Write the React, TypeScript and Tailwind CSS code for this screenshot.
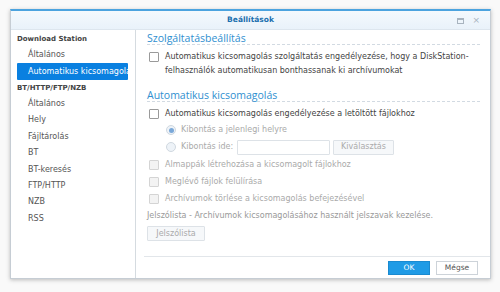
import React from 'react'

const font = { fontFamily: '"DejaVu Sans", Verdana, sans-serif' }
const headFont = { fontFamily: '"Open Sans", sans-serif' }

const Check = ({ disabled }: { disabled?: boolean }) => (
    <span
        className={`inline-block w-[10px] h-[10px] shrink-0 border rounded-[1px] ${
            disabled ? 'border-[#d4d4d4] bg-[#f3f3f3]' : 'border-[#9a9a9a] bg-white'
        }`}
    />
)

const Radio = ({ checked }: { checked?: boolean }) => (
    <span className="inline-flex items-center justify-center w-[10px] h-[10px] shrink-0 rounded-full border border-[#d0d8e0] bg-[#eef3f8]">
        {checked && <span className="w-[5px] h-[5px] rounded-full bg-[#7aa8d8]" />}
    </span>
)

const SideItem = ({ label, active }: { label: string; active?: boolean }) => (
    <div
        className={`h-[16.4px] flex items-center pl-[11px] text-[8px] whitespace-nowrap overflow-hidden ${
            active ? 'bg-[#0a80e0] text-white rounded-[1px]' : 'text-[#555]'
        }`}
    >
        {label}
    </div>
)

export default function App() {
    return (
        <div className="w-[500px] h-[292px] bg-[#f9f9f9] relative" style={font}>
            <div className="absolute left-[10px] top-[9px] w-[481px] h-[270px] bg-white border border-[#c6cdd4] border-t-2 border-t-[#4ba3df] shadow-[0_1px_4px_rgba(0,0,0,0.25)] flex flex-col">
                {/* title bar */}
                <div className="h-[19px] shrink-0 flex items-center justify-center relative bg-gradient-to-b from-[#f4f9fd] to-[#e9f2fa] border-b border-[#dde6ee]">
                    <span className="text-[7.5px] font-bold text-[#1a6fae]">Beállítások</span>
                    <div className="absolute right-[10px] top-[5px] flex items-center gap-[8px] text-[#a8b4bf]">
                        <span className="w-[7px] h-[6px] border border-[#a8b4bf] border-t-2" />
                        <span className="text-[9px] leading-none">×</span>
                    </div>
                </div>

                <div className="flex flex-1 min-h-0">
                    {/* sidebar */}
                    <div className="w-[125px] shrink-0 border-r border-[#d5dbe0] pl-[6px] pr-[7px] pt-[1px]">
                        <div className="h-[16px] flex items-center text-[7px] font-bold text-[#444]">Download Station</div>
                        <SideItem label="Általános" />
                        <SideItem label="Automatikus kicsomagolás" active />
                        <div className="h-[16px] flex items-center text-[7px] font-bold text-[#444]">BT/HTTP/FTP/NZB</div>
                        <SideItem label="Általános" />
                        <SideItem label="Hely" />
                        <SideItem label="Fájltárolás" />
                        <SideItem label="BT" />
                        <SideItem label="BT-keresés" />
                        <SideItem label="FTP/HTTP" />
                        <SideItem label="NZB" />
                        <SideItem label="RSS" />
                    </div>

                    {/* content */}
                    <div className="flex-1 flex flex-col min-w-0">
                        <div className="flex-1 pl-[11px] pr-[10px] pt-[2px] text-[8px] text-[#444]">
                            <div className="text-[10.5px] leading-[12px] text-[#2f8fd0] border-b border-dashed border-[#d2dae2]" style={headFont}>
                                Szolgáltatásbeállítás
                            </div>
                            <div className="flex gap-[6px] mt-[5px] leading-[14px]">
                                <span className="mt-[2px] ml-[2px]">
                                    <Check />
                                </span>
                                <span className="whitespace-nowrap">
                                    Automatikus kicsomagolás szolgáltatás engedélyezése, hogy a DiskStation-
                                    <br />
                                    felhasználók automatikusan bonthassanak ki archívumokat
                                </span>
                            </div>

                            <div className="text-[10.5px] leading-[12px] text-[#2f8fd0] mt-[11px] border-b border-dashed border-[#d2dae2]" style={headFont}>
                                Automatikus kicsomagolás
                            </div>
                            <div className="flex items-center gap-[6px] h-[16px] mt-[4px] pl-[2px]">
                                <Check />
                                <span>Automatikus kicsomagolás engedélyezése a letöltött fájlokhoz</span>
                            </div>
                            <div className="flex items-center gap-[5px] h-[16px] pl-[19px] text-[#aaa]">
                                <Radio checked />
                                <span>Kibontás a jelenlegi helyre</span>
                            </div>
                            <div className="flex items-center gap-[5px] h-[18px] pl-[19px] text-[#aaa]">
                                <Radio />
                                <span className="w-[51px] shrink-0 whitespace-nowrap">Kibontás ide:</span>
                                <span className="w-[93px] h-[15px] shrink-0 border border-[#dde2e7] rounded-[1px] bg-white" />
                                <span className="h-[15px] w-[61px] shrink-0 ml-[-2px] border border-[#dde2e7] rounded-[1px] bg-[#f6f8fa] flex items-center justify-center">
                                    Kiválasztás
                                </span>
                            </div>
                            {[
                                'Almappák létrehozása a kicsomagolt fájlokhoz',
                                'Meglévő fájlok felülírása',
                                'Archívumok törlése a kicsomagolás befejezésével',
                            ].map((t) => (
                                <div key={t} className="flex items-center gap-[6px] h-[17px] pl-[2px] text-[#aaa]">
                                    <Check disabled />
                                    <span>{t}</span>
                                </div>
                            ))}
                            <div className="h-[17px] flex items-center text-[#999]">
                                Jelszólista - Archívumok kicsomagolásához használt jelszavak kezelése.
                            </div>
                            <div className="mt-[2px] h-[15px] w-[58px] border border-[#dde2e7] rounded-[1px] bg-[#f6f8fa] text-[#aaa] flex items-center justify-center">
                                Jelszólista
                            </div>
                        </div>

                        {/* footer */}
                        <div className="h-[22px] shrink-0 ml-[8px] border-t border-[#e2e6ea] flex items-center justify-end gap-[6px] pr-[12px]">
                            <span className="w-[42px] h-[14px] bg-[#1f9be6] border border-[#1a8ad0] text-white text-[7.5px] flex items-center justify-center">
                                OK
                            </span>
                            <span className="w-[42px] h-[14px] bg-white border border-[#cdd3d9] text-[#555] text-[7.5px] flex items-center justify-center">
                                Mégse
                            </span>
                        </div>
                    </div>
                </div>
            </div>
        </div>
    )
}
